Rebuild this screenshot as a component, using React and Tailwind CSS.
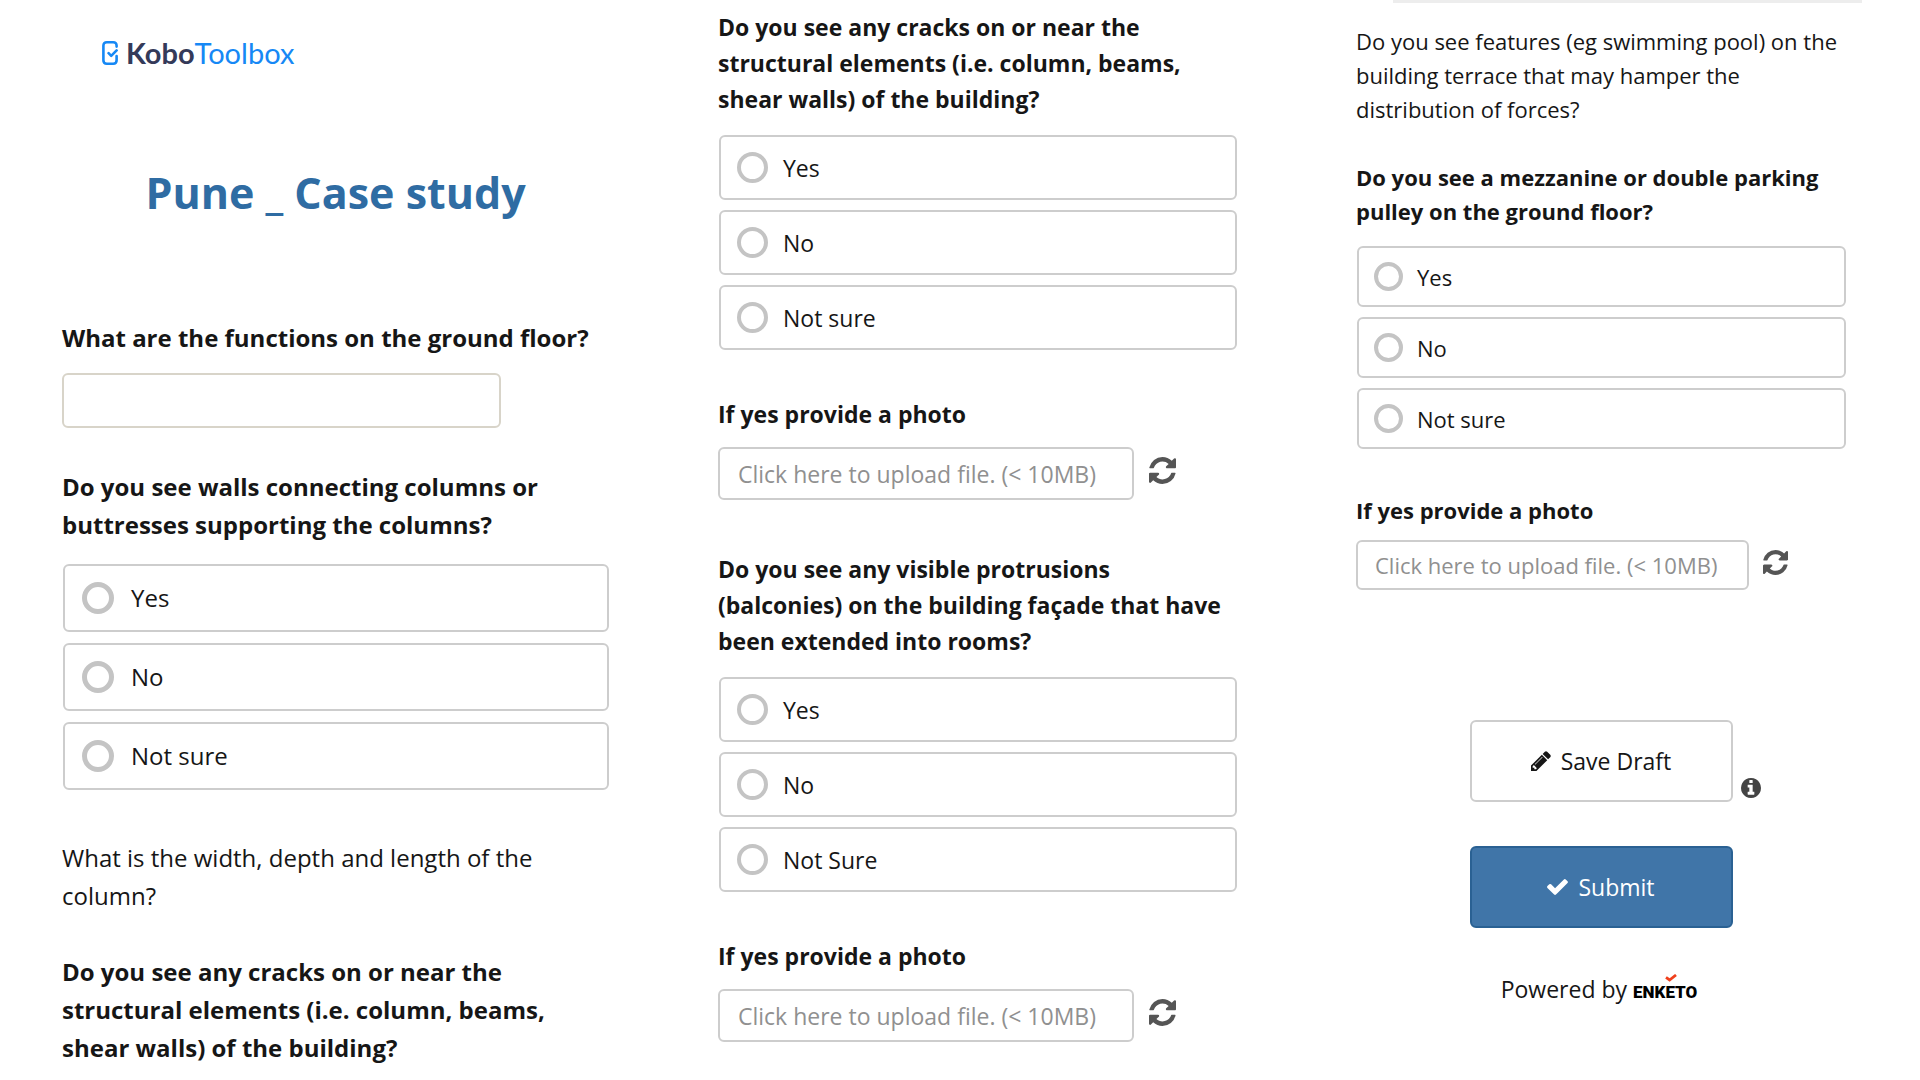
import React from "react";

const SIZES = {
  lg: {
    text: "text-[24px] leading-[38px]",
    options: "mt-5 ml-px gap-[11px]",
    option: "h-[68px] gap-[17px] px-[17px]",
    radio: "size-8 border-[5px]",
  },
  md: {
    text: "text-[23px] leading-[36px]",
    options: "mt-[18px] ml-px gap-[10px]",
    option: "h-[65px] gap-[15px] px-[16px]",
    radio: "size-[31px] border-4",
    upload: "mt-[15px]",
    file: "h-[53px] w-[416px] px-[18px]",
    refresh: "ml-[15px] size-[27px]",
  },
  sm: {
    text: "text-[22px] leading-[34px]",
    options: "mt-[18px] ml-px gap-[10px]",
    option: "h-[61px] gap-[14px] px-[15px]",
    radio: "size-[29px] border-4",
    upload: "mt-[13px]",
    file: "h-[50px] w-[393px] px-[17px]",
    refresh: "ml-[14px] size-[25px]",
  },
};

function RefreshIcon() {
  return (
    <svg viewBox="128 128 1536 1536" className="size-full" fill="currentColor" aria-hidden="true">
      <path d="M1639 1056q0 5-1 7-64 268-268 434.5t-478 166.5q-146 0-282.5-55t-243.5-157l-129 129q-19 19-45 19t-45-19-19-45v-448q0-26 19-45t45-19h448q26 0 45 19t19 45-19 45l-137 137q71 66 161 102t187 36q134 0 250-65t186-179q11-17 53-117 8-23 30-23h192q13 0 22.5 9.5t9.5 22.5zm25-800v448q0 26-19 45t-45 19h-448q-26 0-45-19t-19-45 19-45l138-138q-148-137-349-137-134 0-250 65t-186 179q-11 17-53 117-8 23-30 23h-199q-13 0-22.5-9.5t-9.5-22.5v-7q65-268 270-434.5t480-166.5q146 0 284 55.5t245 156.5l130-129q19-19 45-19t45 19 19 45z" />
    </svg>
  );
}

function PencilIcon() {
  return (
    <svg viewBox="128 128 1536 1536" className="size-5" fill="currentColor" aria-hidden="true">
      <path d="M491 1536l91-91-235-235-91 91v107h128v128h107zm523-928q0-22-22-22-10 0-17 7l-542 542q-7 7-7 17 0 22 22 22 10 0 17-7l542-542q7-7 7-17zm-54-192l416 416-832 832h-416v-416zm683 96q0 53-37 90l-166 166-416-416 166-165q36-38 90-38 53 0 91 38l235 234q37 39 37 91z" />
    </svg>
  );
}

function CheckIcon() {
  return (
    <svg viewBox="121 334 1550 1188" className="h-4 w-[21px]" fill="currentColor" aria-hidden="true">
      <path d="M1671 566q0 40-28 68l-724 724-136 136q-28 28-68 28t-68-28l-136-136-362-362q-28-28-28-68t28-68l136-136q28-28 68-28t68 28l294 295 656-657q28-28 68-28t68 28l136 136q28 28 28 68z" />
    </svg>
  );
}

function InfoIcon() {
  return (
    <svg viewBox="128 128 1536 1536" className="size-full" fill="currentColor" aria-hidden="true">
      <path d="M1152 1376v-160q0-14-9-23t-23-9h-96v-512q0-14-9-23t-23-9h-320q-14 0-23 9t-9 23v160q0 14 9 23t23 9h96v320h-96q-14 0-23 9t-9 23v160q0 14 9 23t23 9h448q14 0 23-9t9-23zm-128-896v-160q0-14-9-23t-23-9h-192q-14 0-23 9t-9 23v160q0 14 9 23t23 9h192q14 0 23-9t9-23zm640 416q0 209-103 385.5t-279.5 279.5-385.5 103-385.5-103-279.5-279.5-103-385.5 103-385.5 279.5-279.5 385.5-103 385.5 103 279.5 279.5 103 385.5z" />
    </svg>
  );
}

function KoboLogo() {
  return (
    <div className="flex h-6 items-center gap-2">
      <svg viewBox="0 0 16 24" className="h-6 w-4" fill="none" stroke="#1688f5" strokeWidth="2.6" strokeLinecap="round" strokeLinejoin="round" aria-hidden="true">
        <path d="M14.6 5.6V4.8C14.6 2.6 13.4 1.3 11.2 1.3H4.8C2.6 1.3 1.4 2.6 1.4 4.8V19.2C1.4 21.4 2.6 22.7 4.8 22.7H11.2C13.4 22.7 14.6 21.4 14.6 19.2V15" />
        <path d="M6.6 12.2L9.2 14.8L14.6 9.4" />
      </svg>
      <p className="font-['Lato',sans-serif] text-[29px] leading-6 text-[#1688f5]">
        <span className="font-bold text-[#343a59]">Kobo</span>Toolbox
      </p>
    </div>
  );
}

function Choice({ name, label, options, size, className = "" }) {
  const s = SIZES[size];
  return (
    <fieldset className={className}>
      <legend className={`font-bold ${s.text}`}>{label}</legend>
      <div className={`flex flex-col ${s.options}`}>
        {options.map((option) => (
          <label key={option} className={`flex items-center rounded-md border-2 border-[#cdcdcd] ${s.option} ${s.text}`}>
            <input
              type="radio"
              name={name}
              value={option}
              className={`shrink-0 appearance-none rounded-full border-[#c4c4c4] checked:bg-[#2f6ca3] ${s.radio}`}
            />
            {option}
          </label>
        ))}
      </div>
    </fieldset>
  );
}

function Photo({ id, size, className = "" }) {
  const s = SIZES[size];
  return (
    <div className={className}>
      <label htmlFor={id} className={`block font-bold ${s.text}`}>
        If yes provide a photo
      </label>
      <div className={`flex items-start ${s.upload}`}>
        <input
          id={id}
          type="text"
          readOnly
          placeholder="Click here to upload file. (< 10MB)"
          className={`min-w-0 rounded-md border-2 border-[#cdcdcd] placeholder:text-[#909090] ${s.file} ${s.text}`}
        />
        <button type="button" aria-label="Reset photo" className={`mt-[10px] shrink-0 text-[#555] ${s.refresh}`}>
          <RefreshIcon />
        </button>
      </div>
    </div>
  );
}

export default function App() {
  const cracks =
    "Do you see any cracks on or near the structural elements (i.e. column, beams, shear walls) of the building?";
  return (
    <form
      className="grid min-h-screen grid-cols-3 bg-white font-['Open_Sans',sans-serif] text-[#161616]"
      onSubmit={(e) => e.preventDefault()}
    >
      <section className="pt-[41px] pr-[31px] pl-[62px]">
        <header>
          <div className="pl-10">
            <KoboLogo />
          </div>
          <h1 className="mt-[98px] text-center text-[43px] leading-[60px] font-bold text-[#2f6ca3]">Pune _ Case study</h1>
        </header>
        <div className="mt-24">
          <label htmlFor="functions" className="block text-[24px] leading-[38px] font-bold">
            What are the functions on the ground floor?
          </label>
          <input
            id="functions"
            type="text"
            className="mt-4 h-[55px] w-[439px] rounded-md border-2 border-[#d8d4c9] px-4 text-[24px]"
          />
        </div>
        <Choice
          name="walls"
          size="lg"
          className="mt-10"
          label="Do you see walls connecting columns or buttresses supporting the columns?"
          options={["Yes", "No", "Not sure"]}
        />
        <p className="mt-[49px] text-[24px] leading-[38px]">What is the width, depth and length of the column?</p>
        <p className="mt-[38px] text-[24px] leading-[38px] font-bold">{cracks}</p>
      </section>

      <section className="pt-[9px] pr-[43px] pl-[78px]">
        <Choice name="cracks" size="md" label={cracks} options={["Yes", "No", "Not sure"]} />
        <Photo id="cracks-photo" size="md" className="mt-[46px]" />
        <Choice
          name="protrusions"
          size="md"
          className="mt-[51px]"
          label="Do you see any visible protrusions (balconies) on the building façade that have been extended into rooms?"
          options={["Yes", "No", "Not Sure"]}
        />
        <Photo id="protrusions-photo" size="md" className="mt-[46px]" />
      </section>

      <section className="pr-[74px] pl-[76px]">
        <div className="-mr-4 ml-[37px] h-[3px] bg-[#ededed]" />
        <p className="mt-[21px] text-[22px] leading-[34px]">
          Do you see features (eg swimming pool) on the building terrace that may hamper the distribution of forces?
        </p>
        <Choice
          name="mezzanine"
          size="sm"
          className="mt-[34px]"
          label="Do you see a mezzanine or double parking pulley on the ground floor?"
          options={["Yes", "No", "Not sure"]}
        />
        <Photo id="mezzanine-photo" size="sm" className="mt-11" />
        <div className="mt-[130px] flex flex-col items-center text-[23px] leading-[36px]">
          <div className="flex items-end gap-2 pl-7">
            <button
              type="button"
              className="flex h-[82px] w-[263px] items-center justify-center gap-[10px] rounded-md border-2 border-[#cdcdcd]"
            >
              <PencilIcon />
              Save Draft
            </button>
            <button type="button" aria-label="About drafts" className="mb-1 size-5 text-[#444]">
              <InfoIcon />
            </button>
          </div>
          <button
            type="submit"
            className="mt-11 flex h-[82px] w-[263px] items-center justify-center gap-[10px] rounded-md border-2 border-[#2a6193] bg-[#4075a8] text-white"
          >
            <CheckIcon />
            Submit
          </button>
          <p className="mt-[43px] flex items-baseline gap-1.5 pr-1">
            Powered by
            <a href="#enketo" className="relative font-['Roboto',sans-serif] text-[17px] font-black text-black">
              ENKETO
              <svg viewBox="0 0 12 8" className="absolute top-0 left-8 h-2 w-3" fill="none" stroke="#f0401c" strokeWidth="2.8" aria-hidden="true">
                <path d="M1 3.4L4.6 6L11 1" />
              </svg>
            </a>
          </p>
        </div>
      </section>
    </form>
  );
}
